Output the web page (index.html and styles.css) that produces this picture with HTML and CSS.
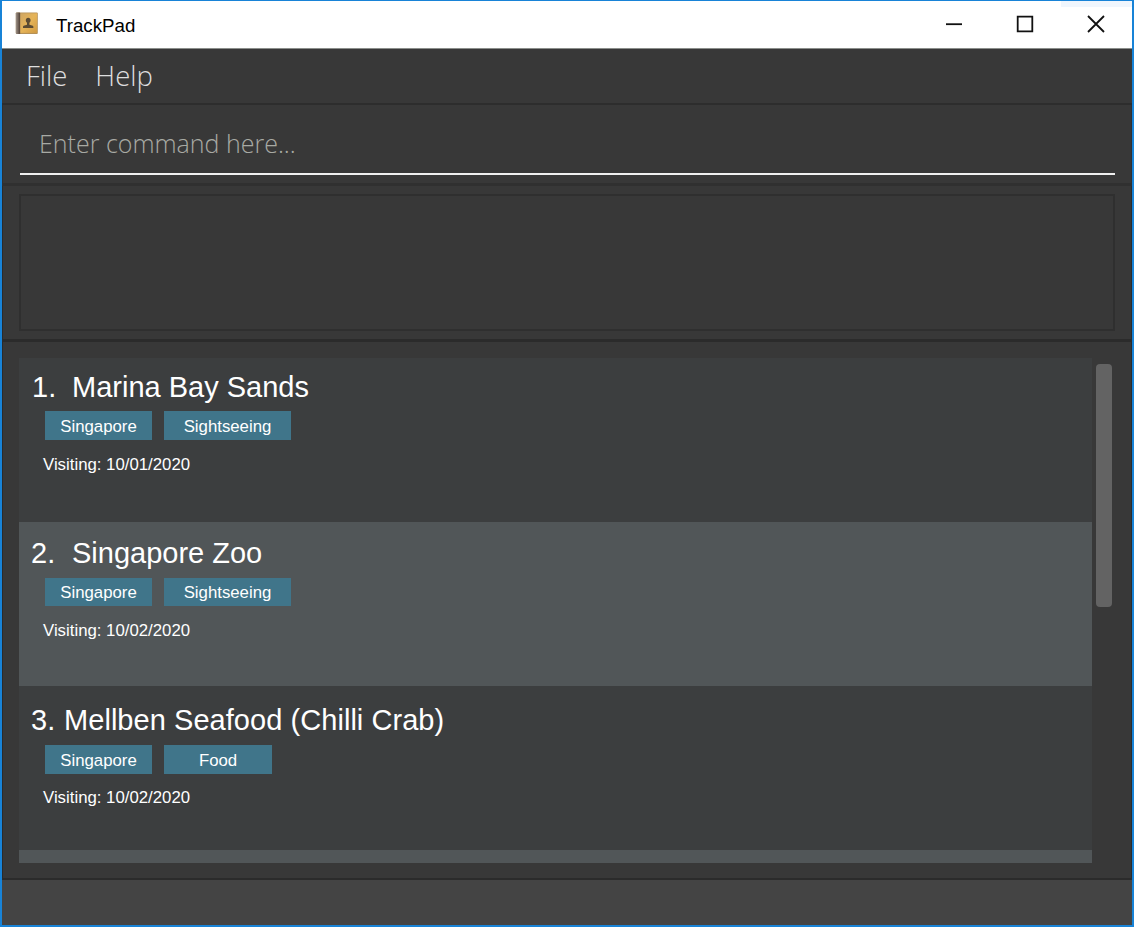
FILE: index.html
```html
<!DOCTYPE html>
<html lang="en">
<head>
<meta charset="utf-8">
<title>TrackPad</title>
<link rel="stylesheet" href="styles.css">
</head>
<body>
<div class="window">
  <header class="titlebar">
    <svg class="app-icon" width="24" height="24" viewBox="0 0 24 24">
      <defs>
        <linearGradient id="cover" x1="0" y1="0" x2="1" y2="1"><stop offset="0" stop-color="#cfa663"/><stop offset=".5" stop-color="#e6b458"/><stop offset="1" stop-color="#d09a42"/></linearGradient>
        <linearGradient id="spine" x1="0" y1="0" x2="1" y2="0"><stop offset="0" stop-color="#a0948a"/><stop offset="1" stop-color="#4b3b30"/></linearGradient>
      </defs>
      <rect x="0.8" y="0.500" width="22" height="21.5" rx="1" fill="#b59157"/>
      <rect x="0.800" y="0.500" width="4.500" height="21.5" rx="1" fill="url(#spine)"/>
      <rect x="5.300" y="1.3" width="16.700" height="19.6" fill="url(#cover)"/>
      <path d="M13.200 5.700c-1.500 0-2.400 1.100-2.400 2.500 0 1.200.5 1.900 1.200 2.600v1.900l-3.400 1.100c-.5.2-.6.5-.6 2.200h10.400c0-1.700-.1-2-.6-2.200l-3.400-1.100v-1.900c.7-.7 1.200-1.400 1.200-2.600 0-1.400-.9-2.500-2.400-2.500z" fill="#5b4b33"/>
    </svg>
    <span class="app-name">TrackPad</span>
    <div class="controls">
      <svg width="18" height="18" viewBox="0 0 18 18"><path d="M1 9.200h16"/></svg>
      <svg width="18" height="18" viewBox="0 0 18 18"><path d="M1.700 1.700h14.600v14.600h-14.600z"/></svg>
      <svg width="18" height="18" viewBox="0 0 18 18"><path d="M1 1l16 16M17 1l-16 16"/></svg>
    </div>
    <i class="glint"></i>
  </header>
  <nav class="menu"><span>File</span><span class="help">Help</span></nav>
  <section class="command"><div class="field">Enter command here...</div></section>
  <section class="result"><div class="result-box"></div></section>
  <main class="list-panel">
    <div class="list">
      <article class="card">
        <h2><span class="num">1.</span><span class="place">Marina Bay Sands</span></h2>
        <div class="tags"><span class="tag">Singapore</span><span class="tag wide">Sightseeing</span></div>
        <p>Visiting: 10/01/2020</p>
      </article>
      <article class="card alt">
        <h2><span class="num">2.</span><span class="place">Singapore Zoo</span></h2>
        <div class="tags"><span class="tag">Singapore</span><span class="tag wide">Sightseeing</span></div>
        <p>Visiting: 10/02/2020</p>
      </article>
      <article class="card third">
        <h2><span class="num">3.</span><span class="place">Mellben Seafood (Chilli Crab)</span></h2>
        <div class="tags"><span class="tag">Singapore</span><span class="tag food">Food</span></div>
        <p>Visiting: 10/02/2020</p>
      </article>
      <article class="card alt last"></article>
    </div>
    <div class="scroll"><div class="thumb"></div></div>
  </main>
  <footer class="status"></footer>
</div>
</body>
</html>
```

FILE: styles.css
```css
* { box-sizing: border-box; margin: 0; }
body { font-family: "Liberation Sans", Arial, sans-serif; overflow: hidden; }
.window {
  width: 1134px; height: 927px;
  display: flex; flex-direction: column;
  background: #383838;
  border: 2px solid #1883d7;
  border-top-width: 1px;
}
.titlebar {
  position: relative;
  height: 48px; flex: none;
  display: flex; align-items: center;
  padding: 0 27px 2px 13px;
  background: #fff;
  border-bottom: 1px solid #8b8e8b;
}
.app-name { margin-left: 17px; padding-top: 4px; font-size: 18.700px; color: #000; }
.controls { margin-left: auto; display: flex; gap: 53px; }
.controls svg { fill: none; stroke: #111; stroke-width: 1.800; }
.glint { position: absolute; top: 0; right: 0; width: 71px; height: 6px; background: #f0f6fd; }
.menu {
  height: 56px; flex: none;
  display: flex;
  padding: 7px 0 0 24px;
  font: 300 27.500px/40px "Open Sans", "Noto Sans", sans-serif;
  color: #dedede;
  border-bottom: 2px solid #2d2d2d;
}
.help { margin-left: 28px; }
.command {
  height: 81px; flex: none;
  padding: 0 16px 0 17px;
  border: 1px solid #303030;
  border-width: 0 1px 3px;
}
.command .field {
  height: 70px;
  padding: 18px 0 0 19px;
  border-bottom: 2px solid #f0f0f0;
  font: 300 25px/40px "Open Sans", "Noto Sans", sans-serif;
  color: #a8aaa4;
}
.result {
  height: 156px; flex: none;
  padding: 8px 16px 0;
  border: 1px solid #2b2b2b;
  border-width: 0 1px 3px;
}
.result-box { height: 137px; border: 2px solid #2f2f2f; }
.list-panel {
  height: 538px; flex: none;
  display: flex;
  padding: 16px 0 0 16px;
  border: 1px solid #2b2b2b;
  border-width: 0 1px 2px;
}
.list { width: 1073px; height: 505px; overflow: hidden; background: #3c3e3f; }
.card { height: 164px; padding: 12px 0 0 13px; color: #fff; }
.card.alt { padding-top: 14px; background: #515658; }
.card.third { padding-top: 17px; }
.card.last { height: 13px; padding: 0; }
h2 { display: flex; font-size: 29px; font-weight: 400; line-height: 34px; }
.num { width: 40px; }
.alt .num, .third .num { margin-left: -1px; width: 41px; }
.third .num { width: 33px; }
.third .place { letter-spacing: 0.050px; }
.tags { display: flex; gap: 12px; margin: 7px 0 0 13px; }
.alt .tags, .third .tags { margin-top: 8px; }
.tag {
  width: 107px; height: 29px;
  background: #40758a;
  text-align: center;
  font-size: 16.800px; line-height: 31px;
}
.alt .tag { height: 28px; line-height: 30px; }
.tag.wide { width: 127px; }
.tag.food { width: 108px; }
.card p { margin: 15px 0 0 11px; font-size: 16.800px; line-height: 20px; }
.third p { margin-top: 14px; }
.scroll { width: 25px; padding: 6px 0 0 4px; }
.thumb { width: 16px; height: 243px; border-radius: 4px; background: #636363; }
.status { flex: 1; background: #444; }
```
